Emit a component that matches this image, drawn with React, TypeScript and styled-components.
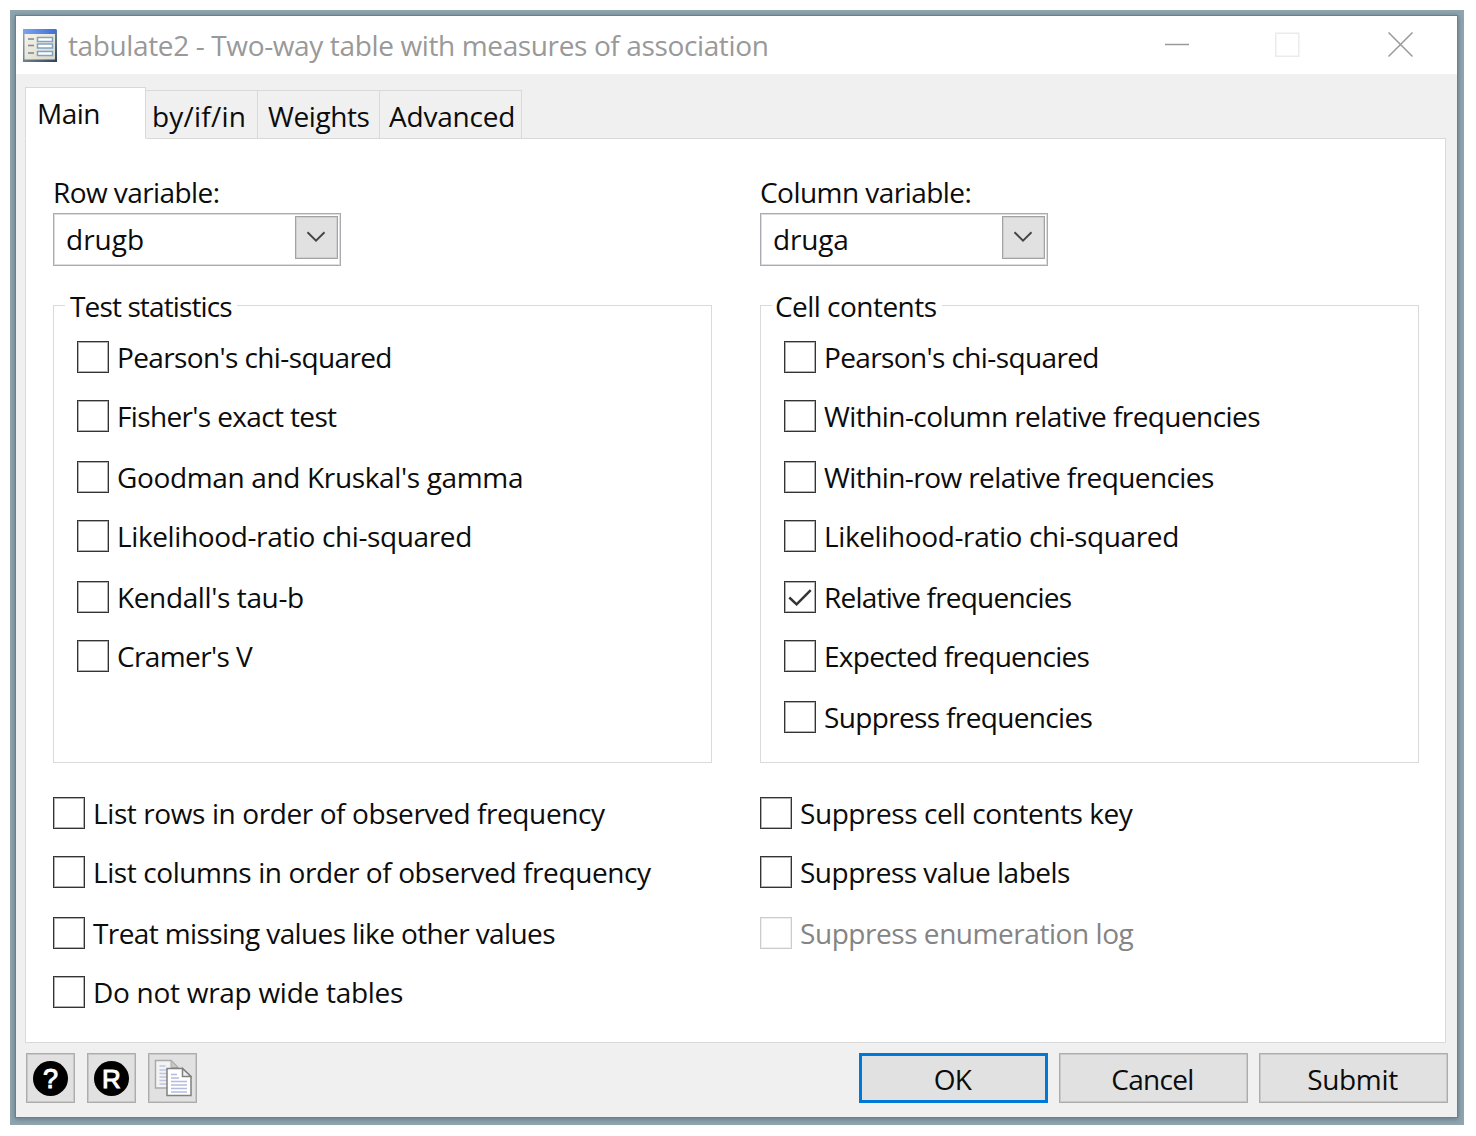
import React, { useState } from 'react';
import styled, { createGlobalStyle } from 'styled-components';

const Global = createGlobalStyle`
  * { box-sizing: border-box; }
  body { margin: 0; background: #fff; }
`;

const Desktop = styled.div`
  width: 1454px;
  height: 1115px;
  margin: 10px 0 0 10px;
  padding: 5px 6px 7px 5px;
  background: #8fa5af;
  font-family: "Open Sans", "Noto Sans", sans-serif;
  font-size: 28px;
  color: #0c0c0c;
`;

const Window = styled.div`
  display: flex;
  flex-direction: column;
  height: 1103px;
  border: 1px solid #707e85;
  background: #f0f0f0;
  box-shadow: 0 1px 5px rgba(40, 60, 70, 0.45);
`;

const TitleBar = styled.header`
  display: flex;
  align-items: center;
  height: 58px;
  flex: none;
  padding: 0 43px 0 7px;
  background: #fff;
`;

const Text = styled.span<{ $track?: number }>`
  white-space: pre;
  letter-spacing: ${p => p.$track ?? 0}px;
`;

const Title = styled(Text)`
  flex: 1;
  margin-left: 11px;
  color: #999;
`;

const WindowControls = styled.div`
  display: grid;
  grid-template-columns: 110px 113px 26px;
  margin-top: -1px;
`;

const TabStrip = styled.nav`
  display: flex;
  align-items: flex-end;
  height: 52px;
  flex: none;
  margin: 13px 0 -1px 9px;
`;

const Tab = styled.button<{ $active?: boolean; $width: number; $pad: number }>`
  width: ${p => p.$width}px;
  height: ${p => (p.$active ? 52 : 49)}px;
  padding: ${p => (p.$active ? 0 : 3)}px 0 0 ${p => p.$pad}px;
  text-align: left;
  font: inherit;
  line-height: ${p => (p.$active ? 51 : 45)}px;
  color: inherit;
  background: ${p => (p.$active ? '#fff' : '#f0f0f0')};
  border: 1px solid #d9d9d9;
  border-left-width: ${p => (p.$active ? 1 : 0)}px;
  border-bottom-color: ${p => (p.$active ? '#fff' : '#d9d9d9')};
  position: relative;
`;

const Panel = styled.main`
  display: grid;
  grid-template-columns: 659px 659px;
  column-gap: 48px;
  align-content: start;
  width: 1421px;
  height: 905px;
  flex: none;
  margin-left: 9px;
  padding: 33px 27px 0;
  border: 1px solid #d9d9d9;
  background: #fff;
`;

const Field = styled.label`
  display: flex;
  flex-direction: column;
  line-height: 41px;
`;

const Combo = styled.div`
  display: flex;
  justify-content: space-between;
  width: 288px;
  height: 53px;
  padding: 2px 2px 0 12px;
  border: 1px solid #a9abb0;
  box-shadow: inset 0 0 0 1px #dcdde0;
  line-height: 46px;
`;

const ComboButton = styled.button`
  display: grid;
  place-items: center;
  width: 43px;
  height: 43px;
  padding: 0 2px 2px 0;
  border: 1px solid #a3a3a3;
  box-shadow: inset 0 0 0 1px #cfcfcf;
  background: #e1e1e1;
`;

const Group = styled.fieldset`
  min-width: 0;
  height: 477px;
  margin: 20px 0 0;
  padding: 17px 0 0 23px;
  border: 1px solid #dadada;
`;

const Legend = styled.legend<{ $pad: number }>`
  height: 38px;
  margin-left: -12px;
  padding: 0 5px 0 ${p => p.$pad}px;
  line-height: 40px;
`;

const Options = styled.div`
  display: flex;
  flex-direction: column;
`;

const LooseOptions = styled(Options)`
  margin-top: 34px;
`;

const Option = styled.label<{ $disabled?: boolean }>`
  display: flex;
  gap: 8px;
  height: 59px;
  line-height: 33px;
  color: ${p => (p.$disabled ? '#848484' : 'inherit')};
  &:nth-child(even) { height: 61px; }
`;

const Box = styled.span<{ $disabled?: boolean }>`
  display: grid;
  place-items: center;
  width: 32px;
  height: 32px;
  flex: none;
  background: #fff;
  border: 1px solid ${p => (p.$disabled ? '#cccccc' : '#333')};
  box-shadow: inset 0 0 0 1px ${p => (p.$disabled ? '#efefef' : '#b0b0b0')};
`;

const HiddenInput = styled.input`
  display: none;
`;

const Footer = styled.footer`
  display: flex;
  gap: 11px;
  padding: 10px 9px 0 10px;
`;

const Tools = styled.div`
  display: flex;
  flex: 1;
  gap: 12px;
`;

const PushButton = styled.button<{ $width?: number; $primary?: boolean }>`
  display: grid;
  place-items: center;
  width: ${p => p.$width ?? 189}px;
  height: 50px;
  padding: 2px 2px 0 0;
  font: inherit;
  line-height: 40px;
  color: inherit;
  background: #e1e1e1;
  border: ${p => (p.$primary ? '3px solid #0078d7' : '1px solid #adadad')};
  box-shadow: ${p => (p.$primary ? 'none' : 'inset 0 0 0 1px #c8c8c8')};
`;

const IconButton = styled(PushButton)`
  padding: 0;
`;

const Disc = styled.span<{ $size: number }>`
  display: grid;
  place-items: center;
  width: 35px;
  height: 35px;
  border-radius: 50%;
  background: #000;
  color: #fff;
  font: ${p => p.$size}px/36px "Liberation Sans", Arial, sans-serif;
  -webkit-text-stroke: 1px #fff;
`;

const DialogIcon = () => (
  <svg width="34" height="33" viewBox="0 0 34 33">
    <defs>
      <linearGradient id="bar" x1="0" x2="1">
        <stop offset="0" stopColor="#7ba4f0" />
        <stop offset="1" stopColor="#3f6fd6" />
      </linearGradient>
      <linearGradient id="sheet" x1="0" y1="0" x2="1" y2="1">
        <stop offset="0" stopColor="#f6f4e6" />
        <stop offset="1" stopColor="#dcd9c8" />
      </linearGradient>
      <linearGradient id="edge" x1="0" y1="0" x2="1" y2="1">
        <stop offset="0" stopColor="#8fa3bd" />
        <stop offset="0.5" stopColor="#6c7f95" />
        <stop offset="1" stopColor="#2f4055" />
      </linearGradient>
    </defs>
    <rect y="1" width="34" height="32" fill="url(#edge)" />
    <rect x="1.500" y="5" width="30.500" height="25.500" fill="url(#sheet)" />
    <rect width="33.500" height="5" fill="url(#bar)" />
    {[10, 16.5, 24].map(y => (
      <g key={y}>
        <path d={`M5 ${y}h6`} stroke="#7d8ba6" strokeWidth="1.6" />
        <rect x="14.500" y={y - 1.5} width="15" height="4" fill="#fff" stroke="#7da3c8" strokeWidth="1.500" />
      </g>
    ))}
  </svg>
);

const Chevron = () => (
  <svg width="20" height="12" viewBox="0 0 20 12">
    <path d="M1.500 1.200L10 9.600L18.500 1.200" fill="none" stroke="#444" strokeWidth="1.900" />
  </svg>
);

const Check = () => (
  <svg width="24" height="18" viewBox="0 0 24 18">
    <path d="M1.300 9.500L8.600 16.300L22.700 2.200" fill="none" stroke="#333" strokeWidth="2.500" />
  </svg>
);

const CopyIcon = () => (
  <svg width="38" height="38" viewBox="0 0 38 38">
    <path d="M1.500 1.500h15.500l7 7v20.500h-22.500z" fill="#f3f3f3" stroke="#a9a9a9" strokeWidth="1.400" />
    <path d="M17 1.500v7h7z" fill="#c9c9c9" stroke="#a9a9a9" />
    <path d="M5.500 7h6M5.500 11h8M5.500 14.500h8M5.500 18h8M5.500 21.500h8M5.500 25h8" stroke="#bfc5e0" strokeWidth="1.500" />
    <path d="M13 9.500h15.500l8.500 8v19h-24z" fill="#fff" stroke="#808080" strokeWidth="1.500" />
    <path d="M28.500 9.500v8h8.500z" fill="#f0f0f0" stroke="#808080" strokeWidth="1.500" />
    <path d="M17 15.500h6M17 19h8M17 22.500h16M17 26h16M17 29.500h16M17 33h16" stroke="#b4bbdf" strokeWidth="1.500" />
  </svg>
);

type Item = { label: string; track: number; checked?: boolean; disabled?: boolean };

const testStatistics: Item[] = [
  { label: "Pearson's chi-squared", track: -0.62 },
  { label: "Fisher's exact test", track: -0.64 },
  { label: "Goodman and Kruskal's gamma", track: -0.35 },
  { label: 'Likelihood-ratio chi-squared', track: -0.38 },
  { label: "Kendall's tau-b", track: -0.38 },
  { label: "Cramer's V", track: -0.61 },
];

const cellContents: Item[] = [
  { label: "Pearson's chi-squared", track: -0.62 },
  { label: 'Within-column relative frequencies', track: -0.57 },
  { label: 'Within-row relative frequencies', track: -0.58 },
  { label: 'Likelihood-ratio chi-squared', track: -0.38 },
  { label: 'Relative frequencies', track: -0.79, checked: true },
  { label: 'Expected frequencies', track: -0.74 },
  { label: 'Suppress frequencies', track: -0.65 },
];

const listing: Item[] = [
  { label: 'List rows in order of observed frequency', track: -0.4 },
  { label: 'List columns in order of observed frequency', track: -0.41 },
  { label: 'Treat missing values like other values', track: -0.61 },
  { label: 'Do not wrap wide tables', track: -0.28 },
];

const suppression: Item[] = [
  { label: 'Suppress cell contents key', track: -0.44 },
  { label: 'Suppress value labels', track: -0.51 },
  { label: 'Suppress enumeration log', track: -0.45, disabled: true },
];

function CheckOption({ label, track, checked, disabled }: Item) {
  const [on, setOn] = useState(!!checked);
  return (
    <Option $disabled={disabled}>
      <HiddenInput type="checkbox" checked={on} disabled={disabled} onChange={e => setOn(e.target.checked)} />
      <Box $disabled={disabled}>{on && <Check />}</Box>
      <Text $track={track}>{label}</Text>
    </Option>
  );
}

const optionList = (items: Item[]) => items.map(i => <CheckOption key={i.label} {...i} />);

function Variable({ label, track, value, valueTrack }: { label: string; track: number; value: string; valueTrack: number }) {
  return (
    <Field>
      <Text $track={track}>{label}</Text>
      <Combo>
        <Text $track={valueTrack}>{value}</Text>
        <ComboButton><Chevron /></ComboButton>
      </Combo>
    </Field>
  );
}

export default function App() {
  return (
    <>
      <Global />
      <Desktop>
        <Window>
          <TitleBar>
            <DialogIcon />
            <Title $track={-0.37}>tabulate2 - Two-way table with measures of association</Title>
            <WindowControls>
              <svg width="25" height="26"><path d="M0 12.500h24" stroke="#999" strokeWidth="1.500" /></svg>
              <svg width="25" height="26"><rect x="0.750" y="1.250" width="23" height="23" fill="none" stroke="#ebebeb" strokeWidth="1.500" /></svg>
              <svg width="25" height="26"><path d="M0.500 0.500L24.500 24.500M24.500 0.500L0.500 24.500" stroke="#999" strokeWidth="1.500" /></svg>
            </WindowControls>
          </TitleBar>
          <TabStrip>
            <Tab $active $width={121} $pad={11}><Text $track={-0.5}>Main</Text></Tab>
            <Tab $width={112} $pad={6}><Text $track={0.2}>by/if/in</Text></Tab>
            <Tab $width={122} $pad={10}><Text $track={-0.4}>Weights</Text></Tab>
            <Tab $width={142} $pad={9}><Text $track={-0.2}>Advanced</Text></Tab>
          </TabStrip>
          <Panel>
            <Variable label="Row variable:" track={-0.58} value="drugb" valueTrack={0} />
            <Variable label="Column variable:" track={-0.54} value="druga" valueTrack={-0.2} />
            <Group>
              <Legend $pad={5}><Text $track={-0.87}>Test statistics</Text></Legend>
              <Options>{optionList(testStatistics)}</Options>
            </Group>
            <Group>
              <Legend $pad={3}><Text $track={-0.53}>Cell contents</Text></Legend>
              <Options>{optionList(cellContents)}</Options>
            </Group>
            <LooseOptions>{optionList(listing)}</LooseOptions>
            <LooseOptions>{optionList(suppression)}</LooseOptions>
          </Panel>
          <Footer>
            <Tools>
              <IconButton $width={49}><Disc $size={27}>?</Disc></IconButton>
              <IconButton $width={49}><Disc $size={26}>R</Disc></IconButton>
              <IconButton $width={49}><CopyIcon /></IconButton>
            </Tools>
            <PushButton $primary><Text $track={-0.78}>OK</Text></PushButton>
            <PushButton><Text $track={-0.7}>Cancel</Text></PushButton>
            <PushButton><Text $track={-0.33}>Submit</Text></PushButton>
          </Footer>
        </Window>
      </Desktop>
    </>
  );
}
